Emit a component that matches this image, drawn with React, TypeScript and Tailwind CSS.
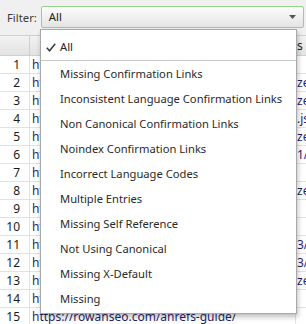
import React from "react";

const rows: { url: string; extra: string }[] = [
  { url: "https://rowanseo.com/", extra: "" },
  { url: "https://rowanseo.com/blog/", extra: "ze" },
  { url: "https://rowanseo.com/about/", extra: "ze" },
  { url: "https://rowanseo.com/wp-includes/js/", extra: ".js" },
  { url: "https://rowanseo.com/contact/", extra: "ze" },
  { url: "https://rowanseo.com/2021/", extra: "1/" },
  { url: "https://rowanseo.com/services/", extra: "" },
  { url: "https://rowanseo.com/seo-audit/", extra: "ze" },
  { url: "https://rowanseo.com/category/", extra: "" },
  { url: "https://rowanseo.com/tag/", extra: "" },
  { url: "https://rowanseo.com/2023/", extra: "3/" },
  { url: "https://rowanseo.com/2023/04/", extra: "3/" },
  { url: "https://rowanseo.com/local-seo/", extra: "ze" },
  { url: "https://rowanseo.com/author/", extra: "" },
  { url: "https://rowanseo.com/ahrefs-guide/", extra: "" },
  { url: "https://rowanseo.com/semrush-guide/", extra: "" },
];

const items = [
  "Missing Confirmation Links",
  "Inconsistent Language Confirmation Links",
  "Non Canonical Confirmation Links",
  "Noindex Confirmation Links",
  "Incorrect Language Codes",
  "Multiple Entries",
  "Missing Self Reference",
  "Not Using Canonical",
  "Missing X-Default",
  "Missing",
];

export default function App() {
  return (
    <div className="relative w-[306px] h-[324px] overflow-hidden bg-white font-['Noto_Sans',sans-serif] text-[12px] leading-none">
      {/* Top filter bar */}
      <div className="flex items-center h-[35px] bg-[#f0f0f0]">
        <span className="ml-[7px] text-[11.3px] text-[#3a3a3a]">Filter:</span>
        <div className="ml-[4px] mb-[2px] flex items-center w-[263px] h-[22px] border border-[#94d38a] rounded-[2px] bg-gradient-to-b from-[#fcfcfc] to-[#e4e4e4] pl-[7px] pr-[7px]">
          <span className="flex-1 text-[11.3px] text-[#222]">All</span>
          <svg width="7" height="4" viewBox="0 0 7 4">
            <path d="M0 0 L7 0 L3.5 4 Z" fill="#555" />
          </svg>
        </div>
      </div>

      {/* Table */}
      <div className="flex flex-col">
        <div className="flex h-[21px] bg-gradient-to-b from-[#f2f2f2] to-[#e3e3e3] border-y border-[#d0d0d0]">
          <div className="w-[30px] border-r border-[#d0d0d0]" />
          <div className="w-[266px] border-r border-[#d0d0d0]" />
          <div className="flex-1 flex items-center pl-[1px] text-[#222]">s</div>
        </div>
        {rows.map((r, i) => (
          <div key={i} className="flex h-[18px] border-b border-[#e2e2e2]">
            <div className="w-[30px] flex items-center justify-end pr-[9px] border-r border-[#e2e2e2] text-[#1a1a1a]">
              {i + 1}
            </div>
            <div className="w-[266px] flex items-center pl-[2px] border-r border-[#e2e2e2] text-[#1f1f6e] whitespace-nowrap overflow-hidden">
              {r.url}
            </div>
            <div className="flex-1 flex items-center pl-[1px] text-[#1f1f6e] whitespace-nowrap overflow-hidden">
              {r.extra}
            </div>
          </div>
        ))}
      </div>

      {/* Dropdown popup */}
      <div className="absolute left-[40px] top-[29px] w-[257px] h-[285px] bg-white border border-[#a8a8a8] shadow-[1px_3px_5px_rgba(0,0,0,0.25)] pt-[4px] text-[11.2px]">
        <div className="flex items-center h-[26px] text-[#222]">
          <span className="w-[19px] pl-[5px] flex items-center">
            <svg width="10" height="9" viewBox="0 0 10 9">
              <path d="M0.8 4.8 L3.6 7.8 L9.2 0.8" fill="none" stroke="#3a3a3a" strokeWidth="1.5" />
            </svg>
          </span>
          <span>All</span>
        </div>
        <div className="h-px bg-[#c8c8c8]" />
        {items.map((t) => (
          <div key={t} className="flex items-center h-[25px] pl-[19px] text-[#2a2a2a] whitespace-nowrap">
            {t}
          </div>
        ))}
      </div>
    </div>
  );
}
